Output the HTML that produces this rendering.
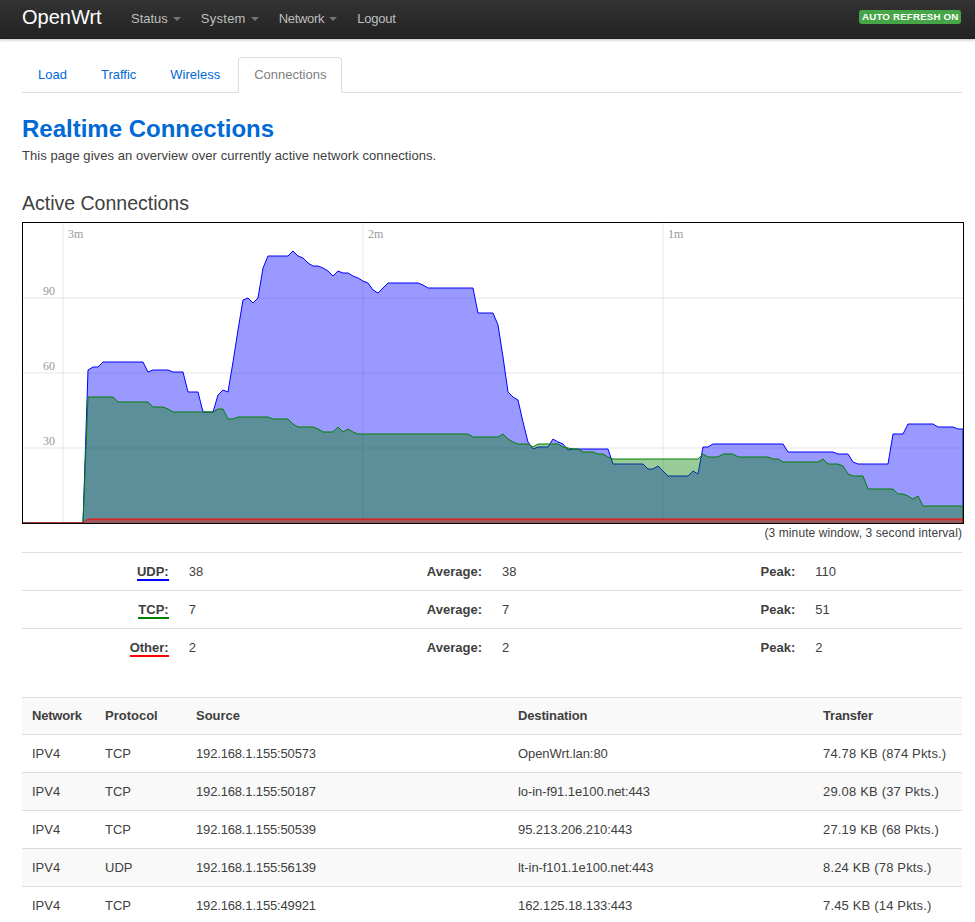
<!DOCTYPE html>
<html><head><meta charset="utf-8"><title>OpenWrt - Connections - LuCI</title>
<style>
*{box-sizing:content-box}
html,body{margin:0;padding:0}
body{width:975px;height:922px;overflow:hidden;background:#fff;color:#404040;font-family:"Liberation Sans",sans-serif;font-size:13px;line-height:18px;position:relative}
header{position:absolute;left:0;top:0;width:975px;height:39px;background:#222;background-image:linear-gradient(to bottom,#333,#222);box-shadow:0 1px 3px rgba(0,0,0,.25),inset 0 -1px 0 rgba(0,0,0,.1)}
header .brand{position:absolute;left:22px;top:6px;font-size:20px;line-height:22px;color:#fff}
header ul{list-style:none;margin:0;padding:0;position:absolute;left:121px;top:0}
header li{float:left}
header li a{display:block;padding:10px 10px 11px;line-height:17px;color:#bfbfbf;text-decoration:none;font-size:13px}
header li a.dd:after{content:"";display:inline-block;width:0;height:0;border-left:4px solid transparent;border-right:4px solid transparent;border-top:4px solid #bfbfbf;margin-left:5px;vertical-align:2px;opacity:.5}
.badge{position:absolute;left:859px;top:10px;width:96px;height:11px;padding:1px 3px 2px;letter-spacing:.16px;background:#46a546;border-radius:3px;color:#fff;font-weight:bold;font-size:9.75px;line-height:11px;text-transform:uppercase;white-space:nowrap}
#main{position:absolute;left:22px;top:57px;width:940px}
ul.tabs{list-style:none;margin:0 0 18px;padding:0;height:35px;border-bottom:1px solid #ddd}
ul.tabs li{float:left;margin-bottom:-1px}
ul.tabs li a{display:block;padding:0 15px;margin-right:2px;line-height:34px;border:1px solid transparent;border-radius:4px 4px 0 0;color:#0069d6;text-decoration:none}
ul.tabs li.active a{background:#fff;border:1px solid #ddd;border-bottom-color:#fff;color:#808080}
h2{margin:0;font-size:24px;line-height:36px;font-weight:bold;color:#0069d6}
.desc{margin:0 0 9px;letter-spacing:.065px}
.legend{display:block;padding:0;margin:29px 0 8px;font-size:19.5px;line-height:1;color:#404040}
#chart{display:block;width:940px;height:300px;border:1px solid #000;background:#fff}
.note{text-align:right;font-size:12px;line-height:18px;letter-spacing:.095px}
table{border-collapse:separate;border-spacing:0;width:940px;margin:0;padding:0}
td,th{padding:10px 10px 9px;line-height:18px;text-align:left;vertical-align:top;border-top:1px solid #ddd;font-size:13px}
th{font-weight:bold;vertical-align:middle;background:#f9f9f9;padding-top:9px}
#stats{table-layout:fixed;margin-top:10px}
#stats td.r{text-align:right}
#stats strong{font-weight:bold}
#conn{margin-top:31px}
#conn tr.alt td{background:#f9f9f9}
#conn td:nth-child(3){letter-spacing:-.16px}
#conn td:nth-child(4){letter-spacing:-.08px}
#conn td:nth-child(5){letter-spacing:.17px}
#conn th:nth-child(1){letter-spacing:-.2px}
#conn th:nth-child(4){letter-spacing:-.14px}
#conn th:nth-child(5){letter-spacing:-.19px}
</style></head><body>
<header>
<a class="brand">OpenWrt</a>
<ul><li><a class="dd">Status</a></li><li><a class="dd" style="letter-spacing:.25px">System</a></li><li><a class="dd" style="letter-spacing:-.3px">Network</a></li><li><a style="letter-spacing:-.25px">Logout</a></li></ul>
<span class="badge">Auto Refresh on</span>
</header>
<div id="main">
<ul class="tabs"><li><a>Load</a></li><li><a>Traffic</a></li><li><a>Wireless</a></li><li class="active"><a>Connections</a></li></ul>
<h2>Realtime Connections</h2>
<div class="desc">This page gives an overview over currently active network connections.</div>
<div class="legend">Active Connections</div>
<svg id="chart" width="940" height="300">
<line x1="0" y1="75" x2="940" y2="75" style="stroke:black;stroke-width:0.1"/>
<line x1="0" y1="150" x2="940" y2="150" style="stroke:black;stroke-width:0.1"/>
<line x1="0" y1="225" x2="940" y2="225" style="stroke:black;stroke-width:0.1"/>
<line x1="40" y1="0" x2="40" y2="300" style="stroke:black;stroke-width:0.1"/>
<text x="45" y="15" style="fill:#999999;font-size:9pt;font-family:Liberation Serif,serif">3m</text>
<line x1="340" y1="0" x2="340" y2="300" style="stroke:black;stroke-width:0.1"/>
<text x="345" y="15" style="fill:#999999;font-size:9pt;font-family:Liberation Serif,serif">2m</text>
<line x1="640" y1="0" x2="640" y2="300" style="stroke:black;stroke-width:0.1"/>
<text x="645" y="15" style="fill:#999999;font-size:9pt;font-family:Liberation Serif,serif">1m</text>
<text x="20" y="72" style="fill:#999999;font-size:9pt;font-family:Liberation Serif,serif">90</text>
<text x="20" y="147" style="fill:#999999;font-size:9pt;font-family:Liberation Serif,serif">60</text>
<text x="20" y="222" style="fill:#999999;font-size:9pt;font-family:Liberation Serif,serif">30</text>
<polyline points="0,300 0,300 5,300 10,300 15,300 20,300 25,300 30,300 35,300 40,300 45,300 50,300 55,300 60,300 65,147 70,144 75,144 80,139 85,139 90,139 95,139 100,139 105,139 110,139 115,139 120,139 125,149 130,147 135,147 140,147 145,147 150,149 155,149 160,149 165,169 170,169 175,169 180,189 185,189 190,189 195,172 200,167 205,169 210,139 215,107 220,77 225,75 230,80 235,75 240,45 245,33 250,33 255,33 260,33 265,33 270,28 275,33 280,35 285,40 290,43 295,43 300,45 305,48 310,53 315,48 320,50 325,50 330,53 335,55 340,58 345,60 350,67 355,70 360,65 365,60 370,60 375,60 380,60 385,60 390,60 395,60 400,62 405,65 410,65 415,65 420,65 425,65 430,65 435,65 440,65 445,65 450,65 455,90 460,90 465,90 470,90 475,102 480,134 485,169 490,174 495,177 500,199 505,219 510,226 515,224 520,224 525,224 530,216 535,219 540,221 545,227 550,226 555,226 560,226 565,226 570,226 575,226 580,226 585,226 590,241 595,241 600,241 605,241 610,241 615,241 620,241 625,246 630,246 635,243 640,248 645,253 650,253 655,253 660,253 665,253 670,248 675,251 680,224 685,224 690,221 695,221 700,221 705,221 710,221 715,221 720,221 725,221 730,221 735,221 740,221 745,221 750,221 755,221 760,221 765,229 770,229 775,229 780,229 785,229 790,229 795,229 800,229 805,229 810,229 815,231 820,231 825,231 830,239 835,241 840,241 845,241 850,241 855,241 860,241 865,241 870,211 875,211 880,211 885,201 890,201 895,201 900,201 905,201 910,201 915,204 920,204 925,204 930,204 935,206 940,206 940,300" style="fill:blue;fill-opacity:0.4;stroke:blue;stroke-width:1"/>
<polyline points="0,300 0,300 5,300 10,300 15,300 20,300 25,300 30,300 35,300 40,300 45,300 50,300 55,300 60,300 65,174 70,174 75,174 80,174 85,174 90,174 95,179 100,179 105,179 110,179 115,179 120,179 125,179 130,184 135,184 140,184 145,186 150,189 155,189 160,189 165,189 170,189 175,189 180,189 185,189 190,189 195,186 200,186 205,196 210,196 215,194 220,194 225,194 230,194 235,194 240,194 245,194 250,196 255,196 260,196 265,196 270,201 275,204 280,204 285,204 290,204 295,206 300,209 305,209 310,209 315,204 320,209 325,206 330,209 335,211 340,211 345,211 350,211 355,211 360,211 365,211 370,211 375,211 380,211 385,211 390,211 395,211 400,211 405,211 410,211 415,211 420,211 425,211 430,211 435,211 440,211 445,211 450,214 455,214 460,214 465,214 470,214 475,214 480,211 485,216 490,219 495,221 500,221 505,221 510,224 515,221 520,221 525,221 530,221 535,221 540,224 545,225 550,226 555,226 560,229 565,229 570,229 575,231 580,231 585,234 590,236 595,236 600,236 605,236 610,236 615,236 620,236 625,236 630,236 635,236 640,236 645,236 650,236 655,236 660,236 665,236 670,236 675,236 680,231 685,234 690,234 695,234 700,231 705,231 710,231 715,234 720,234 725,234 730,234 735,234 740,234 745,234 750,236 755,236 760,239 765,239 770,239 775,239 780,239 785,239 790,239 795,239 800,236 805,241 810,241 815,241 820,243 825,251 830,253 835,253 840,253 845,266 850,266 855,266 860,266 865,266 870,266 875,271 880,271 885,273 890,276 895,273 900,283 905,283 910,283 915,283 920,283 925,283 930,283 935,283 940,283 940,300" style="fill:green;fill-opacity:0.4;stroke:green;stroke-width:1"/>
<polyline points="0,300 0,300 5,300 10,300 15,300 20,300 25,300 30,300 35,300 40,300 45,300 50,300 55,300 60,300 65,296 70,296 75,296 80,296 85,296 90,296 95,296 100,296 105,296 110,296 115,296 120,296 125,296 130,296 135,296 140,296 145,296 150,296 155,296 160,296 165,296 170,296 175,296 180,296 185,296 190,296 195,296 200,296 205,296 210,296 215,296 220,296 225,296 230,296 235,296 240,296 245,296 250,296 255,296 260,296 265,296 270,296 275,296 280,296 285,296 290,296 295,296 300,296 305,296 310,296 315,296 320,296 325,296 330,296 335,296 340,296 345,296 350,296 355,296 360,296 365,296 370,296 375,296 380,296 385,296 390,296 395,296 400,296 405,296 410,296 415,296 420,296 425,296 430,296 435,296 440,296 445,296 450,296 455,296 460,296 465,296 470,296 475,296 480,296 485,296 490,296 495,296 500,296 505,296 510,296 515,296 520,296 525,296 530,296 535,296 540,296 545,296 550,296 555,296 560,296 565,296 570,296 575,296 580,296 585,296 590,296 595,296 600,296 605,296 610,296 615,296 620,296 625,296 630,296 635,296 640,296 645,296 650,296 655,296 660,296 665,296 670,296 675,296 680,296 685,296 690,296 695,296 700,296 705,296 710,296 715,296 720,296 725,296 730,296 735,296 740,296 745,296 750,296 755,296 760,296 765,296 770,296 775,296 780,296 785,296 790,296 795,296 800,296 805,296 810,296 815,296 820,296 825,296 830,296 835,296 840,296 845,296 850,296 855,296 860,296 865,296 870,296 875,296 880,296 885,296 890,296 895,296 900,296 905,296 910,296 915,296 920,296 925,296 930,296 935,296 940,296 940,300" style="fill:red;fill-opacity:0.4;stroke:red;stroke-width:1"/>
</svg>
<div class="note">(3 minute window, 3 second interval)</div>
<table id="stats">
<tr><td class="r"><strong style="border-bottom:2px solid blue">UDP:</strong></td><td>38</td><td class="r"><strong>Average:</strong></td><td>38</td><td class="r"><strong>Peak:</strong></td><td>110</td></tr>
<tr><td class="r"><strong style="border-bottom:2px solid green">TCP:</strong></td><td>7</td><td class="r"><strong>Average:</strong></td><td>7</td><td class="r"><strong>Peak:</strong></td><td>51</td></tr>
<tr><td class="r"><strong style="border-bottom:2px solid red">Other:</strong></td><td>2</td><td class="r"><strong>Average:</strong></td><td>2</td><td class="r"><strong>Peak:</strong></td><td>2</td></tr>
</table>
<table id="conn">
<colgroup><col style="width:73px"><col style="width:91px"><col style="width:322px"><col style="width:305px"><col style="width:149px"></colgroup>
<tr><th>Network</th><th>Protocol</th><th>Source</th><th>Destination</th><th>Transfer</th></tr>
<tr><td>IPV4</td><td>TCP</td><td>192.168.1.155:50573</td><td>OpenWrt.lan:80</td><td>74.78 KB (874 Pkts.)</td></tr>
<tr class="alt"><td>IPV4</td><td>TCP</td><td>192.168.1.155:50187</td><td>lo-in-f91.1e100.net:443</td><td>29.08 KB (37 Pkts.)</td></tr>
<tr><td>IPV4</td><td>TCP</td><td>192.168.1.155:50539</td><td>95.213.206.210:443</td><td>27.19 KB (68 Pkts.)</td></tr>
<tr class="alt"><td>IPV4</td><td>UDP</td><td>192.168.1.155:56139</td><td>lt-in-f101.1e100.net:443</td><td>8.24 KB (78 Pkts.)</td></tr>
<tr><td>IPV4</td><td>TCP</td><td>192.168.1.155:49921</td><td>162.125.18.133:443</td><td>7.45 KB (14 Pkts.)</td></tr>
</table>
</div>
</body></html>
